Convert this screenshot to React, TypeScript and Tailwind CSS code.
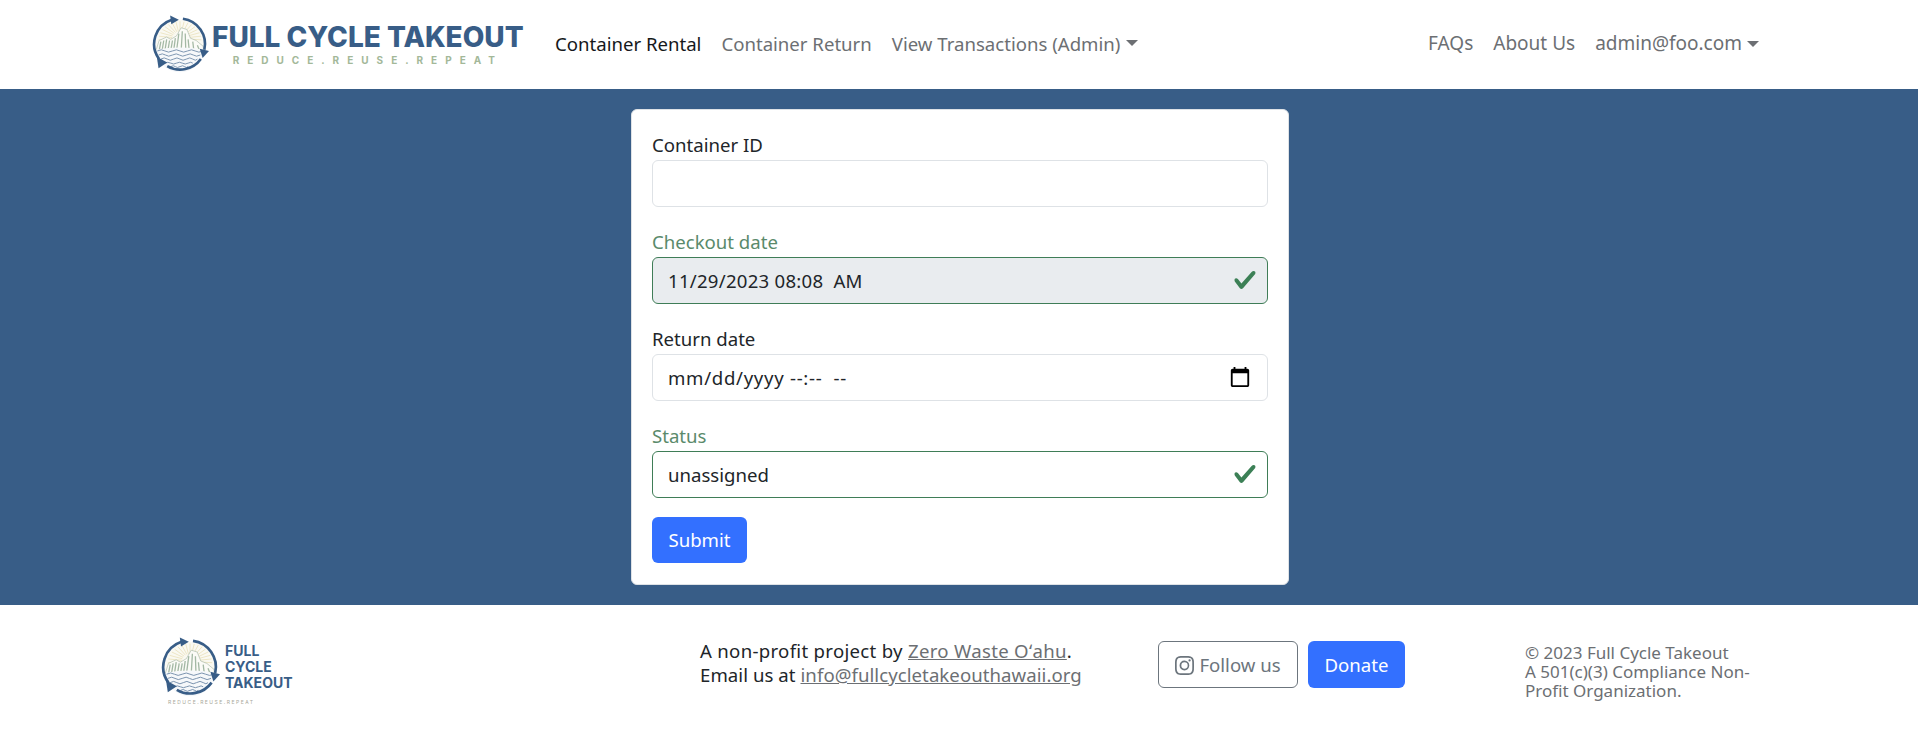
import React from "react";
import { BsInstagram } from "react-icons/bs";

const fontStack = "font-['Noto_Sans','Open_Sans',sans-serif]";

function Emblem({ size }: { size: number }) {
  const rays = Array.from({ length: 17 }, (_, i) => (i - 8) * 11);
  return (
    <svg width={size} height={size} viewBox="0 0 100 100" className="shrink-0 blur-[0.4px]">
      <circle cx="50" cy="50" r="42" fill="#faf9f2" />
      {rays.map((a) => (
        <line
          key={a}
          x1={50 + 14 * Math.sin((a * Math.PI) / 180)}
          y1={42 - 14 * Math.cos((a * Math.PI) / 180)}
          x2={50 + 37 * Math.sin((a * Math.PI) / 180)}
          y2={44 - 33 * Math.cos((a * Math.PI) / 180)}
          stroke="#ebe3c0"
          strokeWidth="1.5"
        />
      ))}
      <path d="M9 60 L14 44 L27 38 L34 42 L44 36 L52 22 L62 25 L68 40 L78 44 L90 54 L91 64 L9 64 Z" fill="#fbfbf7" stroke="#a9b8a8" strokeWidth="1.1" />
      <path
        d="M14 62 L17 46 M19 62 L22 44 M24 62 L27 42 M29 62 L32 44 M34 62 L37 44 M39 62 L42 40 M44 62 L48 32 M52 62 L54 28 M60 62 L59 32 M66 62 L64 42 M74 62 L72 46 M84 62 L80 52"
        stroke="#a3b8a4"
        strokeWidth="2.2"
      />
      <path d="M8 60 Q50 52 92 60 L91 66 A42 42 0 0 1 9 66 Z" fill="#f6f8fa" />
      <path
        d="M11 62 q7 -4 13 0 t13 0 t13 0 t13 0 t13 0 t14 0 M13 69 q7 -4 12 0 t12 0 t12 0 t12 0 t12 0 t12 0 M17 76 q6 -4 11 0 t11 0 t11 0 t11 0 t11 0 t8 0 M24 83 q5 -3 10 0 t10 0 t10 0 t10 0 t8 0 M34 89 q5 -3 8 0 t8 0 t8 0 t6 0"
        fill="none"
        stroke="#6d88a6"
        strokeWidth="1.5"
      />
      <g fill="none" stroke="#385d87" strokeWidth="4.5">
        <path d="M36 8 A44 44 0 0 0 14 76" />
        <path d="M55 6.5 A44 44 0 0 1 92 60" />
        <path d="M86 76 A44 44 0 0 1 28 88" />
      </g>
      <g fill="#385d87">
        <path d="M33 1 L48 8 L35 16 Z" />
        <path d="M84 58 L100 62 L89 74 Z" />
        <path d="M10 72 L28 82 L13 92 Z" />
      </g>
    </svg>
  );
}

function Field({
  label,
  value,
  valid,
  readOnly,
  calendar,
  inputClass,
  last,
}: {
  label: string;
  value: string;
  valid?: boolean;
  readOnly?: boolean;
  calendar?: boolean;
  inputClass?: string;
  last?: boolean;
}) {
  return (
    <div className={last ? "mb-[19px]" : "mb-[21.4px]"}>
      <label
        className={`block text-[18.6px] leading-[27.8px] ${valid ? "text-[#5a8a6b]" : "text-[#212529]"}`}
      >
        {label}
      </label>
      <div className="relative mt-[1px]">
        <input
          readOnly
          value={value}
          className={`block h-[46.8px] w-full rounded-[6px] border px-[15px] text-[18.6px] text-[#212529] outline-none ${
            valid ? "border-[#3f7d57]" : "border-[#dee2e6]"
          } ${readOnly ? "bg-[#e9ecef]" : "bg-white"} ${inputClass ?? ""}`}
        />
        {valid && (
          <svg width="24" height="24" viewBox="0 0 8 8" className="absolute right-[11px] top-[11px]">
            <path
              fill="#3c8056"
              d="M2.3 6.73.6 4.53c-.4-1.04.46-1.4 1.1-.8l1.1 1.4 3.4-3.8c.6-.63 1.6-.27 1.2.7l-4 4.6c-.43.5-.8.4-1.1.1z"
            />
          </svg>
        )}
        {calendar && (
          <svg width="22" height="22" viewBox="0 0 24 24" className="absolute right-[17px] top-[12px]">
            <path d="M20 3h-1V1h-2v2H7V1H5v2H4c-1.1 0-2 .9-2 2v16c0 1.1.9 2 2 2h16c1.1 0 2-.9 2-2V5c0-1.1-.9-2-2-2zm0 18H4V8h16v13z" />
          </svg>
        )}
      </div>
    </div>
  );
}

export default function App() {
  return (
    <div className={`${fontStack} flex h-[738px] flex-col bg-white text-[#212529]`}>
      <nav className="flex h-[89px] shrink-0 items-center pb-[2px] pl-[153px] pr-[149px] text-[18.6px] text-[#6c6f73]">
        <a className="flex w-[392px] shrink-0 items-center">
          <span className="-ml-[2px] flex">
            <Emblem size={58} />
          </span>
          <div className="ml-[3px] flex flex-col items-center">
            <span className="font-['Inter',sans-serif] text-[28px] font-extrabold leading-[32px] whitespace-nowrap text-[#385d87]">
              FULL CYCLE TAKEOUT
            </span>
            <span className="font-['Inter',sans-serif] text-[10px] font-bold leading-[14px] tracking-[0.8em] whitespace-nowrap text-[#a3b899]">
              REDUCE.REUSE.REPEAT
            </span>
          </div>
        </a>
        <a className="px-[10px] text-[#15181b]">Container Rental</a>
        <a className="px-[10px]">Container Return</a>
        <a className="flex items-center px-[10px]">
          View Transactions (Admin)
          <span className="ml-[6px] border-x-[6px] border-t-[6px] border-x-transparent border-t-[#6c6f73]" />
        </a>
        <div className="ml-auto flex text-[19px]">
          <a className="px-[10px]">FAQs</a>
          <a className="px-[10px]">About Us</a>
          <a className="flex items-center px-[10px]">
            admin@foo.com
            <span className="ml-[5px] border-x-[6px] border-t-[6px] border-x-transparent border-t-[#6c6f73]" />
          </a>
        </div>
      </nav>

      <main className="flex h-[516px] shrink-0 justify-center bg-[#385d87] pl-[2px] pt-[20px]">
        <form className="h-[476px] w-[658px] rounded-[6px] border border-[#dee2e6] bg-white px-[20px] pt-[21px]">
          <Field label="Container ID" value="" />
          <Field label="Checkout date" value="11/29/2023 08:08  AM" valid readOnly inputClass="tracking-[0.25px]" />
          <Field label="Return date" value="mm/dd/yyyy --:--  --" calendar inputClass="tracking-[0.7px]" />
          <Field label="Status" value="unassigned" valid last />
          <button type="button" className="h-[46.8px] w-[95px] rounded-[6px] bg-[#3370ff] text-[18.6px] text-white">
            Submit
          </button>
        </form>
      </main>

      <footer className="flex flex-1 items-center pl-[160px] text-[#212529]">
        <div className="flex w-[540px] shrink-0 flex-col">
          <div className="flex items-center">
            <Emblem size={60} />
            <span className="ml-[5px] font-['Inter',sans-serif] text-[14px] font-bold leading-[16px] text-[#385d87]">
              FULL
              <br />
              CYCLE
              <br />
              TAKEOUT
            </span>
          </div>
          <span className="ml-[8px] mt-[1px] font-['Inter',sans-serif] text-[5px] leading-[8px] tracking-[0.3em] text-[#a8a89a]">
            REDUCE.REUSE.REPEAT
          </span>
        </div>
        <div className="mb-[17px] w-[458px] shrink-0 text-[18.6px] leading-[24px]">
          <p className="tracking-[0.3px]">
            A non-profit project by <a className="text-[#6c6f73] underline">Zero Waste Oʻahu</a>.
          </p>
          <p className="tracking-[0.06px]">
            Email us at <a className="text-[#6c6f73] underline">info@fullcycletakeouthawaii.org</a>
          </p>
        </div>
        <a className="mb-[14px] flex h-[47px] w-[140px] shrink-0 items-center justify-center gap-[5px] rounded-[6px] border border-[#6c757d] text-[18.6px] text-[#6c757d]">
          <BsInstagram size={19} className="mt-[2px]" />
          Follow us
        </a>
        <a className="mb-[14px] ml-[10px] flex h-[47px] w-[97px] shrink-0 items-center justify-center rounded-[6px] bg-[#3370ff] text-[18.6px] text-white">
          Donate
        </a>
        <div className="ml-[120px] w-[240px] text-[17px] leading-[19.2px] text-[#6c6f73]">
          © 2023 Full Cycle Takeout
          <br />
          A 501(c)(3) Compliance Non-Profit Organization.
        </div>
      </footer>
    </div>
  );
}
